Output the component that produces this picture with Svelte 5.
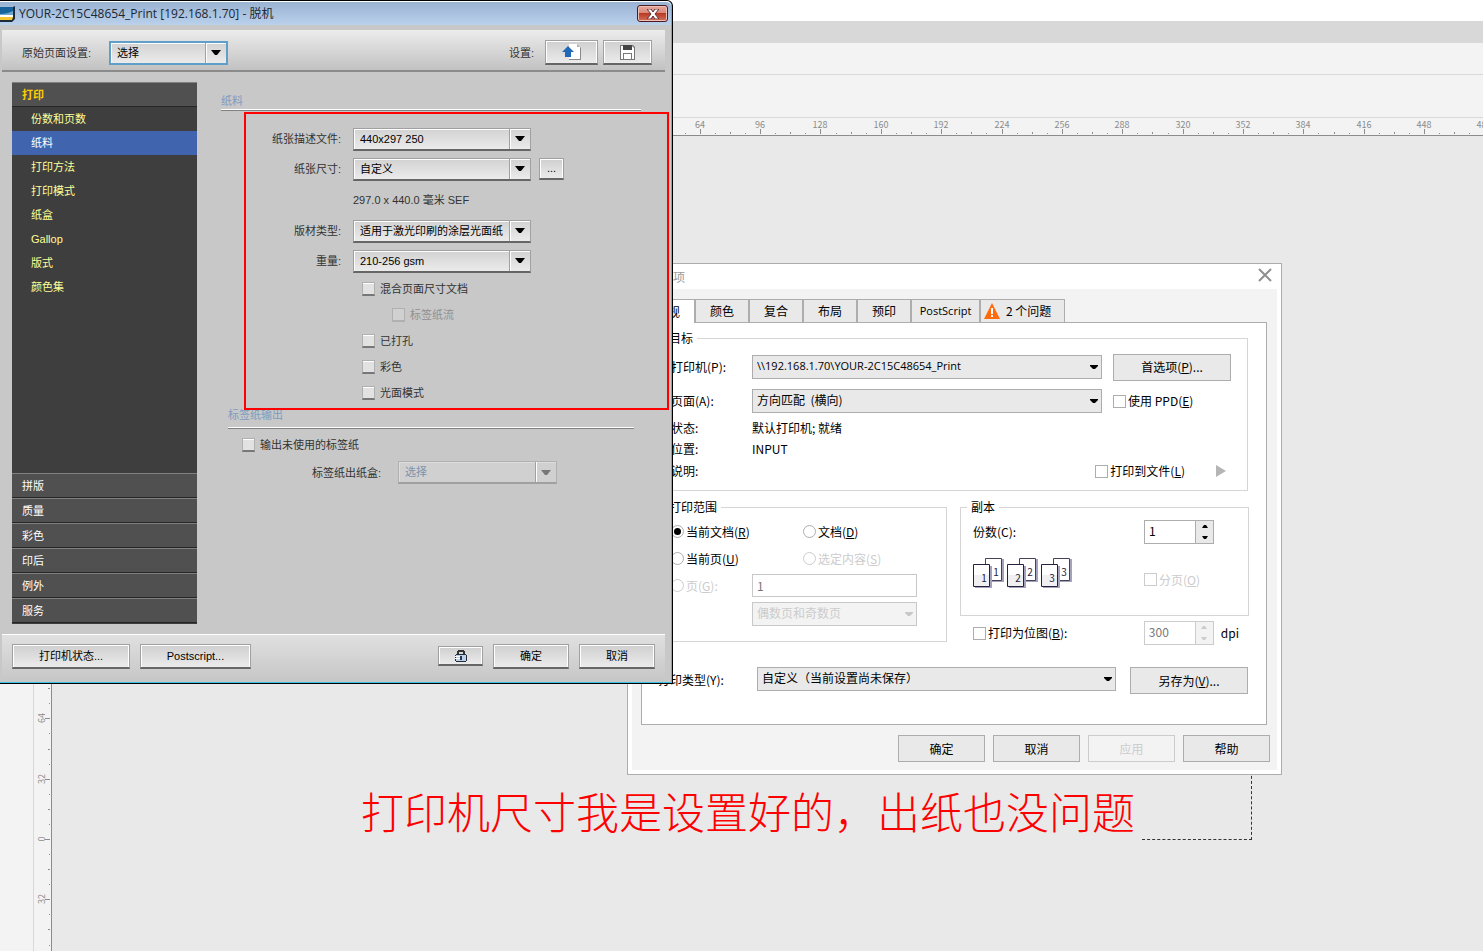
<script lang="ts">
	type Check = { id: string; text: string; nested?: boolean; disabled?: boolean };

	const pages = ['份数和页数', '纸料', '打印方法', '打印模式', '纸盒', 'Gallop', '版式', '颜色集'];
	const groups = ['拼版', '质量', '彩色', '印后', '例外', '服务'];
	const tabs = ['常规', '颜色', '复合', '布局', '预印', 'PostScript'];
	const copies = [1, 2, 3];
	const checks: Check[] = [
		{ id: 'mixed', text: '混合页面尺寸文档' },
		{ id: 'tabflow', text: '标签纸流', nested: true, disabled: true },
		{ id: 'punched', text: '已打孔' },
		{ id: 'color', text: '彩色' },
		{ id: 'glossy', text: '光面模式' }
	];

	let page = $state('纸料');
	let tab = $state('常规');
	let range = $state('doc');
	let width = $state(0);
	let height = $state(0);

	// one ruler step is 8 mm, every fourth one carries a number
	const across = $derived(steps(7, 579, 15.09, width + 8));
	const down = $derived(steps(-10, 704, 15.08, height - 136));

	function steps(from: number, origin: number, step: number, end: number) {
		const list = [];
		for (let n = from; origin + n * step < end; n++) {
			list.push({ n, at: origin + Math.round(n * step) });
		}
		return list;
	}

	function tick(n: number) {
		if (n % 4 === 0) return 11;
		return n % 2 === 0 ? 14 : 15;
	}
</script>

<svelte:window bind:innerWidth={width} bind:innerHeight={height} />

{#snippet drop(id: string, text: string, kind: string, disabled = false)}
	<div class="drop {kind}" class:off={disabled}>
		<select {id} {disabled}><option>{text}</option></select>
		{#if kind.startsWith('flat')}
			<svg width="8" height="4" viewBox="0 0 8 4"><path d="M0 0h8v1L5 4H3L0 1z" /></svg>
		{:else}
			<svg width="10" height="5" viewBox="0 0 10 5"><path d="M0 0h10L6 5H4z" /></svg>
		{/if}
	</div>
{/snippet}

{#snippet spin(id: string, value: number, disabled = false)}
	<div class="spin" class:off={disabled}>
		<input {id} type="text" {value} {disabled} />
		<div>
			<button aria-label="增加" {disabled}><svg width="6" height="3"><path d="M0 3L2 0h2l2 3z" /></svg></button>
			<button aria-label="减少" {disabled}><svg width="6" height="3"><path d="M0 0h6L4 3H2z" /></svg></button>
		</div>
	</div>
{/snippet}

<div class="app">
	<div class="caption"></div>
	<div class="menu"></div>
	<div class="bar"></div>
	<div class="bar tall"></div>
	<svg class="ruler-x">
		{#each across as t}
			<path d="M{t.at} {tick(t.n)}h1V16h-1z" />
			{#if t.n % 4 === 0}
				<text x={t.at} y="10">{Math.abs(t.n * 8)}</text>
			{/if}
		{/each}
	</svg>
	<div class="work">
		<div class="tools"></div>
		<svg class="ruler-y">
			{#each down as t}
				<path d="M{tick(t.n)} {t.at}H16v-1H{tick(t.n)}z" />
				{#if t.n % 4 === 0}
					<text transform="translate(11 {t.at - 1}) rotate(-90)">{Math.abs(t.n * 8)}</text>
				{/if}
			{/each}
		</svg>
		<div class="canvas"></div>
	</div>

	<div class="sheet"></div>
	<p class="note">打印机尺寸我是设置好的，出纸也没问题</p>

	<section class="options">
		<header>
			<span>选项</span>
			<button aria-label="关闭"><svg width="14" height="14"><path d="M1 1l12 12M13 1L1 13" stroke="#8f8f8f" stroke-width="2" /></svg></button>
		</header>
		<div class="inner">
			<div class="tabs">
				{#each tabs as t}
					<button class:active={tab === t} class:wide={t === 'PostScript'} onclick={() => (tab = t)}>{t}</button>
				{/each}
				<button class="issues">
					<svg width="16" height="16" viewBox="0 0 16 16">
						<path d="M8 0l8 16H0z" fill="#ff6a0d" />
						<path d="M7 5h2v6H7zM7 12h2v2H7z" fill="#fff" />
					</svg>
					2 个问题
				</button>
			</div>
			<div class="panel">
				<fieldset class="target">
					<legend>目标</legend>
					<label for="printer">打印机(P):</label>
					{@render drop('printer', '\\\\192.168.1.70\\YOUR-2C15C48654_Print', 'flat latin')}
					<button class="push">首选项(<u>P</u>)...</button>
					<label for="orient">页面(A):</label>
					{@render drop('orient', '方向匹配\u00a0 (横向)', 'flat')}
					<label class="tick"><input type="checkbox" />使用 PPD(<u>E</u>)</label>
					<span>状态:</span><span class="rest">默认打印机; 就绪</span>
					<span>位置:</span><span class="rest">INPUT</span>
					<span>说明:</span>
					<div class="rest tofile">
						<label class="tick"><input type="checkbox" />打印到文件(<u>L</u>)</label>
						<button aria-label="更多"><svg width="10" height="12"><path d="M0 0l10 6L0 12z" fill="#b5b5b5" /></svg></button>
					</div>
				</fieldset>
				<div class="halves">
					<fieldset class="range">
						<legend>打印范围</legend>
						<label class="tick"><input type="radio" value="doc" bind:group={range} />当前文档(<u>R</u>)</label>
						<label class="tick"><input type="radio" value="docs" bind:group={range} />文档(<u>D</u>)</label>
						<label class="tick"><input type="radio" value="page" bind:group={range} />当前页(<u>U</u>)</label>
						<label class="tick off"><input type="radio" value="sel" bind:group={range} disabled />选定内容(<u>S</u>)</label>
						<label class="tick off"><input type="radio" value="pages" bind:group={range} disabled />页(<u>G</u>):</label>
						<input class="pages" type="text" value="1" aria-label="页" disabled />
						<div class="parity">{@render drop('parity', '偶数页和奇数页', 'flat', true)}</div>
					</fieldset>
					<div>
						<fieldset class="copies">
							<legend>副本</legend>
							<label for="count">份数(C):</label>
							{@render spin('count', 1)}
							<svg class="collate" width="100" height="30" aria-hidden="true">
								{#each copies as n, i}
									<g transform="translate({i * 34} 0)">
										<path d="M14 1h17v23H14z" fill="#a5a2bd" />
										<path d="M12.500 .500h16v22h-16z" fill="#fff" stroke="#44415c" />
										<path d="M2 8h17v22H2z" fill="#a5a2bd" />
										<path d="M.500 6.500h16v22H.500z" fill="#fff" stroke="#24223c" />
										<path d="M1 17h15v11H1z" fill="#f0f0f3" />
										<text x="23" y="18">{n}</text>
										<text x="11" y="24">{n}</text>
									</g>
								{/each}
							</svg>
							<label class="tick off"><input type="checkbox" disabled />分页(<u>O</u>)</label>
						</fieldset>
						<div class="bitmap">
							<label class="tick"><input type="checkbox" />打印为位图(<u>B</u>):</label>
							{@render spin('dpi', 300, true)}
							<label for="dpi">dpi</label>
						</div>
					</div>
				</div>
				<div class="style">
					<label for="style">打印类型(Y):</label>
					{@render drop('style', '自定义（当前设置尚未保存）', 'flat')}
					<button class="push">另存为(<u>V</u>)...</button>
				</div>
			</div>
			<footer>
				<button class="push">确定</button>
				<button class="push">取消</button>
				<button class="push" disabled>应用</button>
				<button class="push">帮助</button>
			</footer>
		</div>
	</section>

	<section class="driver">
		<header>
			<svg width="15" height="16" viewBox="0 0 15 16">
				<path d="M0 1h13l2-1v13l-3 3H0z" fill="#1c2b3c" />
				<path d="M0 1h13v8H0z" fill="#17639c" />
				<path d="M0 8c5 0 9-1 13-3v5H0z" fill="#6aa8cf" />
				<path d="M0 9h13v2H0z" fill="#fff" />
				<path d="M0 11h13l-1 3H0z" fill="#f4c531" />
			</svg>
			<h1>YOUR-2C15C48654_Print [192.168.1.70] - 脱机</h1>
			<button aria-label="关闭">
				<svg width="12" height="10" viewBox="0 0 12 10">
					<path d="M0 0h4l2 3 2-3h4L8 5l4 5H8L6 7l-2 3H0l4-5z" fill="#fff" stroke="#5d3038" />
				</svg>
			</button>
		</header>
		<div class="presets">
			<label for="preset">原始页面设置:</label>
			{@render drop('preset', '选择', 'bevel focus')}
			<span>设置:</span>
			<button class="raised" aria-label="载入设置">
				<svg width="20" height="16" viewBox="0 0 20 16">
					<path d="M7 1h9l3 3v12H7z" fill="#8a8a8a" />
					<path d="M7 0h8l3 3v12H7z" fill="#fff" />
					<path d="M15 0v3h3z" fill="#b0b0b0" />
					<path d="M0 8l6-6 6 6H9v5H3V8z" fill="#1f69b8" />
				</svg>
			</button>
			<button class="raised" aria-label="保存设置">
				<svg width="15" height="15" viewBox="0 0 15 15">
					<path d="M0 0h13l2 2v13H0z" fill="#777" />
					<path d="M1 1h11l2 2v11H1z" fill="#fff" />
					<path d="M3 0h9v5H3z" fill="#454545" />
					<path d="M3 8h9v6H3z" fill="#777" />
					<path d="M4 9h7v5H4z" fill="#fff" />
				</svg>
			</button>
		</div>
		<div class="body">
			<nav>
				<button class="group open">打印</button>
				<div class="pagelist">
					{#each pages as p}
						<button class:active={page === p} onclick={() => (page = p)}>{p}</button>
					{/each}
				</div>
				{#each groups as g}
					<button class="group">{g}</button>
				{/each}
			</nav>
			<main>
				<h2>纸料</h2>
				<div class="form">
					<label for="profile">纸张描述文件:</label>
					{@render drop('profile', '440x297 250', 'bevel')}
					<label for="size">纸张尺寸:</label>
					<div class="pair">
						{@render drop('size', '自定义', 'bevel')}
						<button class="raised" aria-label="自定义尺寸">...</button>
					</div>
					<span class="dims">297.0 x 440.0 毫米 SEF</span>
					<label for="media">版材类型:</label>
					{@render drop('media', '适用于激光印刷的涂层光面纸', 'bevel')}
					<label for="weight">重量:</label>
					{@render drop('weight', '210-256 gsm', 'bevel')}
				</div>
				{#each checks as c}
					<label class="check" class:nested={c.nested} class:off={c.disabled}>
						<input id={c.id} type="checkbox" disabled={c.disabled} />{c.text}
					</label>
				{/each}
				<div class="tabpaper">
					<h2>标签纸输出</h2>
					<label class="check"><input type="checkbox" />输出未使用的标签纸</label>
					<div class="tray">
						<label for="tray">标签纸出纸盒:</label>
						{@render drop('tray', '选择', 'bevel', true)}
					</div>
				</div>
			</main>
		</div>
		<footer>
			<button class="raised status">打印机状态...</button>
			<button class="raised ps">Postscript...</button>
			<button class="raised lock" aria-label="锁定">
				<svg width="12" height="12" viewBox="0 0 12 12">
					<path d="M3 0h6v1h1v4H8V2H4v3H2V1h1z" fill="#333" />
					<path d="M0 5h1V4h10v1h1v6h-1v1H1v-1H0z" fill="#202a38" />
					<path d="M1 5h10v6H1z" fill="#bccfe6" />
					<path d="M0 6h5v1H0zM0 8h5v1H0z" fill="#fff" />
					<path d="M5 6h2v4H5z" fill="#26354d" />
				</svg>
			</button>
			<button class="raised ok">确定</button>
			<button class="raised ok">取消</button>
		</footer>
		<div class="highlight"></div>
	</section>
</div>

<style>
	:global(body) {
		margin: 0;
		background: #e9e9e9;
	}

	.app {
		position: relative;
		display: flex;
		flex-direction: column;
		min-height: 100vh;
		overflow: hidden;
		font: 12px/16px 'Noto Sans CJK SC', sans-serif;
		color: #000;
	}

	.app :global(*) {
		box-sizing: border-box;
	}

	button,
	input,
	select {
		margin: 0;
		padding: 0;
		border: 0;
		border-radius: 0;
		background: none;
		font: inherit;
		color: inherit;
		appearance: none;
		outline: none;
	}

	h1,
	h2 {
		margin: 0;
		font-weight: normal;
	}

	.caption {
		height: 21px;
		background: #fff;
	}

	.menu {
		height: 22px;
		background: #d8d8d8;
	}

	.bar {
		height: 32px;
		background: #f3f3f3;
		border-bottom: 1px solid #d8d8d8;
	}

	.bar.tall {
		height: 43px;
	}

	.ruler-x {
		width: 100%;
		height: 18px;
		background: #f3f3f3;
		border-bottom: 1px solid #8c8c8c;
	}

	.ruler-x path,
	.ruler-y path {
		fill: #8c8c8c;
	}

	.ruler-x text,
	.ruler-y text {
		font: 9px 'Noto Sans CJK SC', sans-serif;
		fill: #8c8c8c;
		text-anchor: middle;
	}

	.work {
		flex: 1;
		display: flex;
	}

	.tools {
		width: 34px;
		background: #f3f3f3;
		border-right: 1px solid #d8d8d8;
	}

	.ruler-y {
		width: 18px;
		height: auto;
		background: #f3f3f3;
		border-right: 1px solid #8c8c8c;
	}

	.canvas {
		flex: 1;
		background: #e9e9e9;
	}

	.sheet {
		position: absolute;
		left: 1142px;
		top: 730px;
		width: 110px;
		height: 110px;
		border: dashed #333;
		border-width: 0 1px 1px 0;
	}

	.note {
		position: absolute;
		left: 361px;
		top: 780px;
		margin: 0;
		font-size: 43px;
		line-height: 60px;
		font-weight: 300;
		white-space: nowrap;
		color: #f00;
	}

	/* options dialog */
	.options {
		position: absolute;
		left: 627px;
		top: 263px;
		width: 655px;
		padding: 0 4px 4px;
		background: #fff;
		border: 1px solid #adadad;
	}

	.options header {
		display: flex;
		justify-content: space-between;
		align-items: center;
		height: 25px;
		padding: 0 5px 0 29px;
		color: #999;
	}

	.options header button {
		display: flex;
		margin-bottom: 3px;
	}

	.inner {
		padding: 10px 10px 0 9px;
		background: #f3f3f3;
	}

	.tabs {
		display: flex;
	}

	.tabs button {
		width: 54px;
		height: 23px;
		background: #e9e9e9;
		border: 1px solid #adadad;
		border-bottom: 0;
	}

	.tabs button.active {
		height: 24px;
		margin-bottom: -1px;
		background: #fff;
	}

	.tabs button.wide {
		width: 69px;
		font: 11px/16px 'Open Sans', sans-serif;
	}

	.tabs .issues {
		display: flex;
		align-items: center;
		gap: 6px;
		width: 85px;
		padding-left: 3px;
	}

	.panel {
		padding: 7px 17px 30px 16px;
		background: #fff;
		border: 1px solid #adadad;
	}

	fieldset {
		margin: 0;
		min-width: 0;
		border: 1px solid #d5d5d5;
	}

	legend {
		margin-left: -6px;
		padding: 0 4px;
	}

	.drop {
		display: grid;
		align-items: center;
	}

	.drop select {
		grid-area: 1 / 1;
		width: 100%;
		height: 100%;
	}

	.drop svg {
		grid-area: 1 / 1;
		justify-self: end;
		margin-right: 4px;
		pointer-events: none;
	}

	.drop.flat {
		height: 24px;
	}

	.drop.flat select {
		padding: 0 16px 2px 4px;
		background: #e9e9e9;
		border: 1px solid #adadad;
	}

	.drop.latin {
		font: 11px/16px 'Open Sans', sans-serif;
	}

	.drop.flat.off select {
		background: #f3f3f3;
		border-color: #c8c8c8;
		color: #ccc;
		opacity: 1;
	}

	.drop.flat.off svg {
		fill: #c8c8c8;
	}

	.push {
		height: 27px;
		background: #e9e9e9;
		border: 1px solid #adadad;
	}

	.push:disabled {
		background: #f3f3f3;
		border-color: #ccc;
		color: #ccc;
	}

	.tick {
		display: flex;
		align-items: center;
	}

	.tick input {
		display: grid;
		place-items: center;
		width: 13px;
		height: 13px;
		margin-right: 2px;
		background: #fff;
		border: 1px solid #adadad;
	}

	.tick input[type='radio'] {
		border-radius: 50%;
	}

	.tick input:checked::before {
		content: '';
		width: 7px;
		height: 7px;
		border-radius: 50%;
		background: #000;
	}

	.tick.off {
		color: #ccc;
	}

	.tick.off input {
		border-color: #ccc;
	}

	.target {
		display: grid;
		grid-template-columns: 81px 1fr 118px;
		grid-template-rows: 34px 34px 20px 22px 22px;
		align-items: center;
		margin-right: 1px;
		padding: 4px 16px 8px 12px;
	}

	.target .drop {
		margin-right: 11px;
	}

	.target .rest {
		grid-column: span 2;
	}

	.tofile {
		display: flex;
		justify-content: end;
		gap: 31px;
		padding-right: 5px;
	}

	.tofile button {
		display: flex;
		align-items: center;
	}

	.halves {
		display: grid;
		grid-template-columns: 1fr 1fr;
		gap: 13px;
		align-items: start;
		margin-top: 8px;
	}

	.range {
		display: grid;
		grid-template-columns: 81px 51px 1fr;
		grid-template-rows: 27px 27px 27px 30px;
		align-items: center;
		padding: 3px 29px 12px 12px;
	}

	.range label:nth-of-type(odd) {
		grid-column: 1 / 3;
	}

	.range label:nth-of-type(5) {
		grid-column: 1;
	}

	.range .pages {
		grid-column: 2 / 4;
		min-width: 0;
		height: 23px;
		padding-left: 4px;
		border: 1px solid #c8c8c8;
		background: #fff;
		color: #777;
	}

	.range .parity {
		grid-column: 2 / 4;
	}

	.copies {
		display: grid;
		grid-template-columns: 1fr 70px;
		grid-template-rows: 25px 71px;
		align-items: center;
		padding: 4px 34px 0 12px;
	}

	.copies .collate {
		margin-bottom: 14px;
	}

	.copies .tick {
		white-space: nowrap;
	}

	.collate text {
		font: 10px 'Noto Sans CJK SC', sans-serif;
		fill: #24223c;
		text-anchor: middle;
	}

	.spin {
		display: flex;
		width: 70px;
		height: 24px;
		border: 1px solid #adadad;
		background: #fff;
	}

	.spin input {
		flex: 1;
		min-width: 0;
		padding: 0 0 2px 4px;
	}

	.spin > div {
		display: flex;
		flex-direction: column;
		width: 18px;
		background: #e9e9e9;
		border-left: 1px solid #adadad;
	}

	.spin button {
		flex: 1;
		display: grid;
		place-items: center;
	}

	.spin.off,
	.spin.off > div {
		border-color: #ccc;
		color: #777;
	}

	.spin.off > div {
		background: #f3f3f3;
	}

	.spin.off svg {
		fill: #ccc;
	}

	.bitmap {
		display: flex;
		align-items: center;
		padding: 5px 10px 0 13px;
	}

	.bitmap .spin {
		margin: 0 7px 0 auto;
	}

	.style {
		display: grid;
		grid-template-columns: 99px 1fr 118px;
		margin: 22px 1px 0 0;
	}

	.style label {
		padding-top: 5px;
	}

	.style .drop {
		margin-right: 14px;
	}

	.options footer {
		display: flex;
		justify-content: end;
		gap: 8px;
		padding: 10px 0 8px;
		margin-right: -3px;
	}

	.options footer .push {
		width: 87px;
	}

	/* printer driver window */
	.driver {
		position: absolute;
		left: 0;
		top: 0;
		width: 673px;
		background: #c8c8c8;
		border: solid #000;
		border-width: 1px 1px 1px 0;
		border-top-right-radius: 6px;
		box-shadow: inset -1px -1px #3fc1e6;
		font: 11px/16px 'Liberation Sans', 'Noto Sans CJK SC', sans-serif;
		color: #333;
	}

	.driver header {
		display: flex;
		align-items: center;
		gap: 4px;
		height: 24px;
		margin-right: 1px;
		padding-right: 3px;
		background: linear-gradient(#9ab3d2, #bad1ec);
		border-top: 1px solid #fff;
		border-top-right-radius: 5px;
		color: #1c2733;
	}

	.driver h1 {
		flex: 1;
		font: 12px/16px 'Open Sans', 'Noto Sans CJK SC', sans-serif;
	}

	.driver header button {
		display: grid;
		place-items: center;
		width: 31px;
		height: 17px;
		background: linear-gradient(#e7a79c, #d98678 50%, #b83a25 50%, #d4705c);
		border: 1px solid #4b1b22;
		border-radius: 3px;
		box-shadow: inset 0 0 0 1px #efc0b8;
	}

	.presets {
		display: flex;
		align-items: center;
		height: 42px;
		margin: 5px 7px 0 2px;
		padding: 5px 13px 0 20px;
		background: linear-gradient(#ececec, #c2c2c2);
		border-bottom: 2px solid #8b8b8b;
	}

	.presets label {
		width: 87px;
	}

	.presets .drop {
		width: 119px;
		margin-right: auto;
	}

	.presets .raised {
		width: 53px;
		margin-left: 11px;
	}

	.presets .raised:last-child {
		width: 49px;
		margin-left: 5px;
	}

	.drop.bevel {
		height: 23px;
		background: linear-gradient(#d2d2d2, #ebebeb);
		border: 1px solid #a0a0a0;
		border-bottom: 2px solid #666;
		box-shadow: inset 1px 1px #fff;
		color: #000;
	}

	.drop.bevel select {
		padding: 0 22px 0 6px;
		background:
			linear-gradient(#a0a0a0, #a0a0a0) right 20px top 0 / 1px 100% no-repeat,
			linear-gradient(#fff, #fff) right 19px top 0 / 1px 100% no-repeat;
	}

	.drop.bevel svg {
		margin-right: 5px;
	}

	.drop.bevel.focus {
		height: 24px;
		border: 2px solid #5f9fc9;
	}

	.drop.bevel.off {
		background: #d0d0d0;
		border: 1px solid #b0b0b0;
		border-bottom: 2px solid #a0a0a0;
		box-shadow: inset 1px 1px #dedede;
		color: #8093ab;
	}

	.drop.bevel.off select {
		opacity: 1;
	}

	.drop.bevel.off svg {
		fill: #777;
	}

	.raised {
		display: grid;
		place-items: center;
		height: 25px;
		background: linear-gradient(#cfcfcf, #ebebeb);
		border: 1px solid #a0a0a0;
		border-bottom: 2px solid #666;
		box-shadow: inset 1px 1px #fff, inset -1px 0 #fff;
		color: #000;
	}

	.body {
		display: flex;
		gap: 24px;
		padding: 10px 30px 10px 12px;
	}

	nav {
		display: flex;
		flex-direction: column;
		width: 185px;
		background: #3e3e3e;
		border-bottom: 1px solid #3e3e3e;
	}

	.group {
		height: 25px;
		padding-left: 10px;
		background: #505050;
		border-top: 1px solid #808080;
		border-bottom: 1px solid #262626;
		color: #fff;
		text-align: left;
	}

	.group.open {
		color: #fc0;
		font-weight: bold;
	}

	.pagelist {
		display: flex;
		flex-direction: column;
		min-height: 366px;
	}

	.pagelist button {
		height: 24px;
		padding-left: 19px;
		color: #ff9;
		text-align: left;
	}

	.pagelist .active {
		background: #4065ae;
		color: #fff;
	}

	main {
		flex: 1;
		padding: 10px 0 0;
	}

	.driver h2 {
		border-bottom: 1px solid #808080;
		box-shadow: inset 0 -1px #fff;
		width: 420px;
		height: 19px;
		font-size: 11px;
		line-height: 18px;
		color: #7e9cc1;
	}

	.form {
		display: grid;
		grid-template-columns: 120px 178px;
		grid-template-rows: 30px 30px 32px 30px 30px;
		column-gap: 12px;
		align-items: center;
		margin-top: 13px;
	}

	.form > label {
		text-align: right;
	}

	.pair {
		display: grid;
		grid-template-columns: 178px 25px;
		gap: 8px;
	}

	.pair .raised {
		height: 22px;
	}

	.dims {
		grid-column: 2;
	}

	.check {
		display: flex;
		align-items: center;
		gap: 5px;
		height: 26px;
		padding-left: 141px;
	}

	.check.nested {
		padding-left: 171px;
	}

	.check input {
		width: 13px;
		height: 14px;
		background: #e2e2e2;
		border: 1px solid #b0b0b0;
		border-bottom: 2px solid #777;
		box-shadow: inset 0 1px #fff;
	}

	.check.off {
		color: #909090;
	}

	.check.off input {
		background: #d0d0d0;
		border-bottom-color: #b0b0b0;
		box-shadow: none;
	}

	.tabpaper {
		padding-left: 7px;
	}

	.tabpaper h2 {
		width: 406px;
		height: 23px;
	}

	.tabpaper .check {
		margin-top: 3px;
		padding-left: 14px;
	}

	.tray {
		display: grid;
		grid-template-columns: 153px 159px;
		column-gap: 17px;
		align-items: center;
		margin-top: 3px;
	}

	.tray label {
		text-align: right;
	}

	.driver footer {
		display: flex;
		align-items: center;
		gap: 10px;
		height: 48px;
		margin: 0 7px 1px 2px;
		padding: 0 10px 5px;
		background: linear-gradient(#e0e0e0, #c6c6c6);
		border-top: 1px solid #fff;
	}

	.status {
		width: 118px;
	}

	.ps {
		width: 111px;
	}

	.lock {
		width: 45px;
		height: 20px;
		margin-left: auto;
	}

	.ok {
		width: 76px;
	}

	.highlight {
		position: absolute;
		left: 244px;
		top: 111px;
		width: 425px;
		height: 298px;
		border: 2px solid #f00;
		pointer-events: none;
	}
</style>
